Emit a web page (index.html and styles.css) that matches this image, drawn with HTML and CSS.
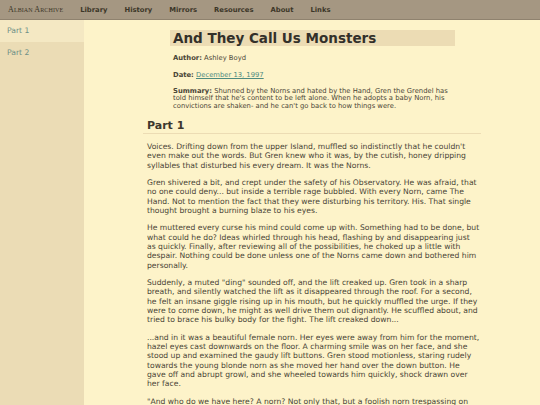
FILE: index.html
```html
<!DOCTYPE html>
<html>
<head>
<meta charset="utf-8">
<link rel="stylesheet" href="styles.css">
</head>
<body>
<nav class="topbar">
  <span class="brand">Albian Archive</span>
  <a class="navlink" href="#">Library</a>
  <a class="navlink" href="#">History</a>
  <a class="navlink" href="#">Mirrors</a>
  <a class="navlink" href="#">Resources</a>
  <a class="navlink" href="#">About</a>
  <a class="navlink" href="#">Links</a>
</nav>
<div class="layout">
  <aside class="sidebar">
    <a class="side-item active" href="#">Part 1</a>
    <a class="side-item" href="#">Part 2</a>
  </aside>
  <main class="main">
    <div class="content">
      <header class="story-head">
        <h1 class="title">And They Call Us Monsters</h1>
        <p class="meta"><b>Author:</b> Ashley Boyd</p>
        <p class="meta"><b>Date:</b> <a class="date" href="#">December 13, 1997</a></p>
        <p class="meta summary"><b>Summary:</b> Shunned by the Norns and hated by the Hand, Gren the Grendel has told himself that he's content to be left alone. When he adopts a baby Norn, his convictions are shaken- and he can't go back to how things were.</p>
      </header>
      <h2 class="part">Part 1</h2>
      <p>Voices. Drifting down from the upper Island, muffled so indistinctly that he couldn't even make out the words. But Gren knew who it was, by the cutish, honey dripping syllables that disturbed his every dream. It was the Norns.</p>
      <p>Gren shivered a bit, and crept under the safety of his Observatory. He was afraid, that no one could deny... but inside a terrible rage bubbled. With every Norn, came The Hand. Not to mention the fact that they were disturbing his territory. His. That single thought brought a burning blaze to his eyes.</p>
      <p>He muttered every curse his mind could come up with. Something had to be done, but what could he do? Ideas whirled through his head, flashing by and disappearing just as quickly. Finally, after reviewing all of the possibilities, he choked up a little with despair. Nothing could be done unless one of the Norns came down and bothered him personally.</p>
      <p>Suddenly, a muted "ding" sounded off, and the lift creaked up. Gren took in a sharp breath, and silently watched the lift as it disappeared through the roof. For a second, he felt an insane giggle rising up in his mouth, but he quickly muffled the urge. If they were to come down, he might as well drive them out dignantly. He scuffled about, and tried to brace his bulky body for the fight. The lift creaked down...</p>
      <p>...and in it was a beautiful female norn. Her eyes were away from him for the moment, hazel eyes cast downwards on the floor. A charming smile was on her face, and she stood up and examined the gaudy lift buttons. Gren stood motionless, staring rudely towards the young blonde norn as she moved her hand over the down button. He gave off and abrupt growl, and she wheeled towards him quickly, shock drawn over her face.</p>
      <p>"And who do we have here? A norn? Not only that, but a foolish norn trespassing on my territory?"</p>
    </div>
  </main>
</div>
</body>
</html>
```

FILE: styles.css
```css
html, body {
  margin: 0;
  padding: 0;
}
body {
  font-family: "DejaVu Sans", Verdana, sans-serif;
  font-size: 7.65px;
  color: #4a4536;
  background: #fdf3c9;
  height: 405px;
  overflow: hidden;
}
.topbar {
  display: flex;
  align-items: center;
  height: 19px;
  background: #a59782;
  border-bottom: 1px solid #8f826e;
  padding-left: 8px;
  gap: 17px;
}
.brand {
  font-family: "Liberation Serif", "Times New Roman", serif;
  font-variant: small-caps;
  font-size: 8px;
  color: #3c3628;
  letter-spacing: 0.1px;
}
.navlink {
  font-weight: bold;
  font-size: 6.8px;
  color: #3c3628;
  text-decoration: none;
}
.layout {
  display: flex;
  height: 385px;
}
.sidebar {
  width: 84px;
  background: #ebdcb5;
  display: flex;
  flex-direction: column;
}
.side-item {
  display: block;
  height: 22px;
  line-height: 22px;
  padding-left: 7px;
  color: #6e8f86;
  text-decoration: none;
}
.side-item.active {
  background: #f4e8c3;
}
.main {
  flex: 1;
  display: flex;
  justify-content: center;
}
.content {
  width: 338px;
}
.story-head {
  margin: 10px 26px 0 27px;
}
.title {
  margin: 0;
  background: #ecdcb4;
  font-size: 13.5px;
  line-height: 16px;
  padding: 0 3px;
  color: #33302a;
}
.meta {
  margin: 8px 0 0 3px;
  font-size: 6.8px;
  line-height: 9px;
}
.summary {
  line-height: 7.35px;
}
.date {
  color: #4e8b80;
}
.part {
  margin: 9px 0 0;
  padding: 0 4px 1px;
  font-size: 11px;
  line-height: 13px;
  color: #3c382e;
  border-bottom: 1px solid #ecdcb4;
}
.content p:not(.meta) {
  margin: 8px 1.75px 0 4px;
  line-height: 9.33px;
}
```
